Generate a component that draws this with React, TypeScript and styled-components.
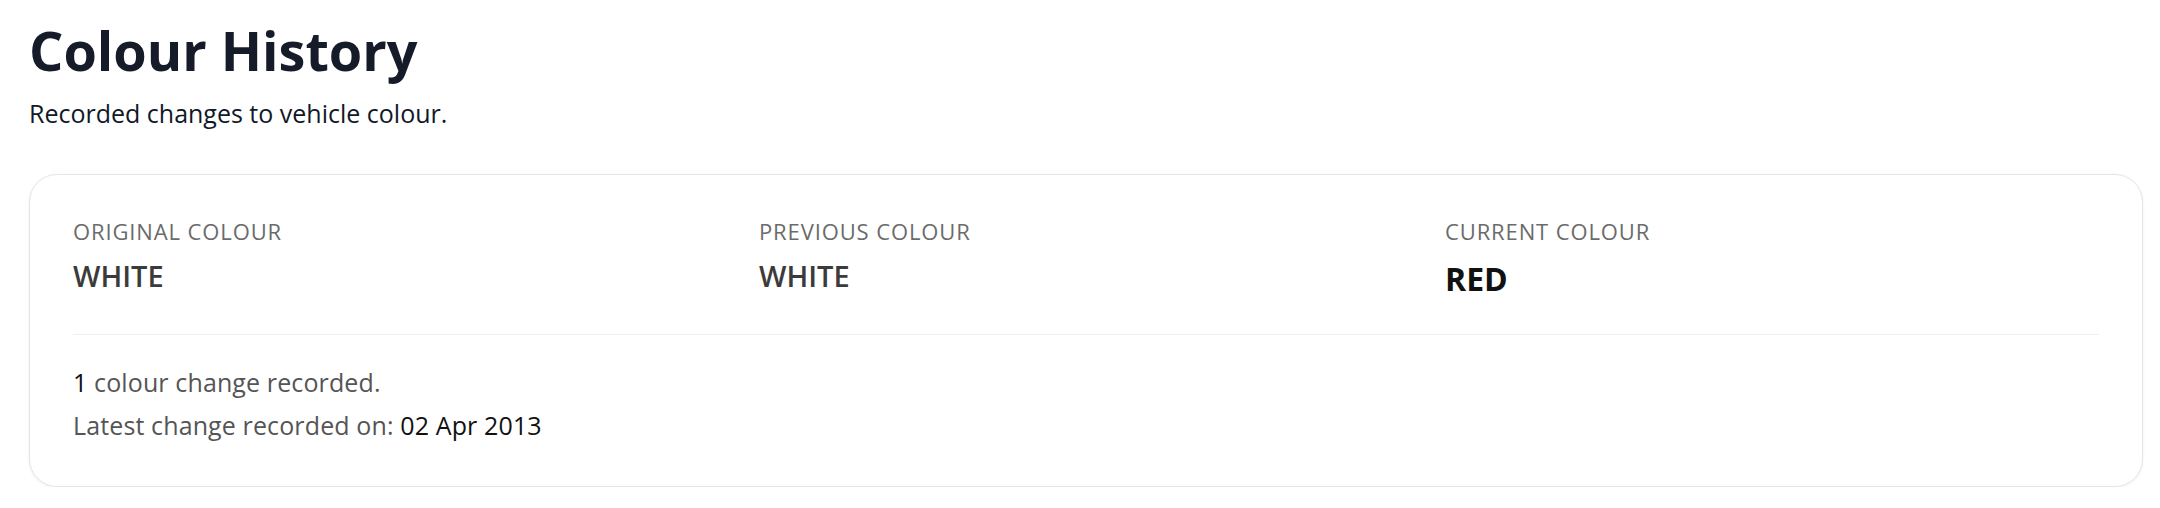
import React from "react";
import styled, { createGlobalStyle } from "styled-components";

const GlobalStyle = createGlobalStyle`
  html, body {
    margin: 0;
    padding: 0;
    background: #ffffff;
  }
  body {
    font-family: "Open Sans", "Noto Sans", sans-serif;
    -webkit-font-smoothing: antialiased;
  }
`;

const Page = styled.main`
  padding: 18px 17px 0 29px;
`;

const Title = styled.h1`
  margin: 0;
  font-size: 54px;
  line-height: 64px;
  font-weight: 700;
  color: #161b29;
`;

const Subtitle = styled.p`
  margin: 14px 0 0;
  font-size: 25px;
  line-height: 34px;
  color: #111827;
`;

const Card = styled.section`
  margin-top: 44px;
  border: 1px solid #e5e5e5;
  border-radius: 28px;
  box-shadow: 0 1px 3px rgba(0, 0, 0, 0.06);
  padding: 41px 43px 44px;
  background: #ffffff;
`;

const Grid = styled.div`
  display: grid;
  grid-template-columns: repeat(3, 1fr);
  gap: 32px;
  padding-bottom: 35px;
  border-bottom: 1px solid #f0f0f0;
`;

const Item = styled.div`
  display: flex;
  flex-direction: column;
`;

const Label = styled.span`
  font-size: 22px;
  line-height: 30px;
  letter-spacing: 0.04em;
  text-transform: uppercase;
  color: #6b6b6b;
`;

const Value = styled.span<{ $current?: boolean }>`
  margin-top: ${(p) => (p.$current ? "13px" : "10px")};
  font-size: ${(p) => (p.$current ? "32px" : "29px")};
  line-height: 40px;
  font-weight: ${(p) => (p.$current ? 700 : 600)};
  color: ${(p) => (p.$current ? "#111111" : "#3b3b3b")};
`;

const Footer = styled.div`
  padding-top: 30px;
  display: flex;
  flex-direction: column;
  gap: 9px;
`;

const Line = styled.p`
  margin: 0;
  font-size: 25px;
  line-height: 34px;
  letter-spacing: 0.005em;
  color: #555555;
`;

const Strong = styled.span`
  color: #111111;
`;

const colours = [
  { label: "Original Colour", value: "WHITE" },
  { label: "Previous Colour", value: "WHITE" },
  { label: "Current Colour", value: "RED", current: true },
];

export default function App() {
  return (
    <>
      <GlobalStyle />
      <Page>
        <Title>Colour History</Title>
        <Subtitle>Recorded changes to vehicle colour.</Subtitle>
        <Card>
          <Grid>
            {colours.map((c) => (
              <Item key={c.label}>
                <Label>{c.label}</Label>
                <Value $current={c.current}>{c.value}</Value>
              </Item>
            ))}
          </Grid>
          <Footer>
            <Line>
              <Strong>1</Strong> colour change recorded.
            </Line>
            <Line>
              Latest change recorded on: <Strong>02 Apr 2013</Strong>
            </Line>
          </Footer>
        </Card>
      </Page>
    </>
  );
}
